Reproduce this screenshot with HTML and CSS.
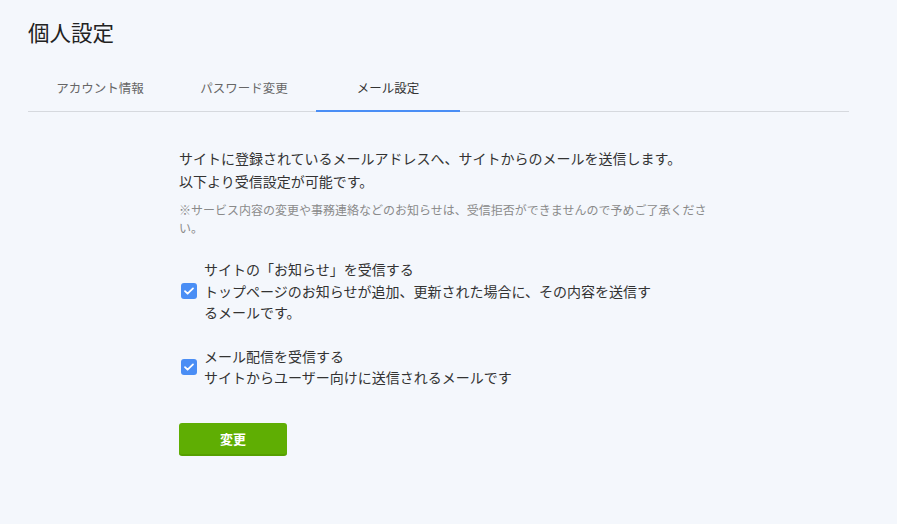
FILE: index.html
```html
<!DOCTYPE html>
<html lang="ja">
<head>
<meta charset="utf-8">
<title>個人設定</title>
<link rel="stylesheet" href="styles.css">
</head>
<body>
<div class="page">
  <h1 class="title">個人設定</h1>
  <nav class="tabs">
    <div class="tab">アカウント情報</div>
    <div class="tab">パスワード変更</div>
    <div class="tab active">メール設定</div>
  </nav>
  <section class="content">
    <p class="lead">サイトに登録されているメールアドレスへ、サイトからのメールを送信します。<br>以下より受信設定が可能です。</p>
    <p class="note">※サービス内容の変更や事務連絡などのお知らせは、受信拒否ができませんので予めご了承ください。</p>
    <div class="options">
      <label class="option">
        <span class="check"><svg width="16" height="16" viewBox="0 0 16 16"><path d="M4 8.2l2.6 2.5L12 5.4" fill="none" stroke="#fff" stroke-width="1.8" stroke-linecap="round" stroke-linejoin="round"/></svg></span>
        <span class="label">サイトの「お知らせ」を受信する<br>トップページのお知らせが追加、更新された場合に、その内容を送信するメールです。</span>
      </label>
      <label class="option">
        <span class="check"><svg width="16" height="16" viewBox="0 0 16 16"><path d="M4 8.2l2.6 2.5L12 5.4" fill="none" stroke="#fff" stroke-width="1.8" stroke-linecap="round" stroke-linejoin="round"/></svg></span>
        <span class="label">メール配信を受信する<br>サイトからユーザー向けに送信されるメールです</span>
      </label>
    </div>
    <button class="submit" type="button">変更</button>
  </section>
</div>
</body>
</html>
```
FILE: styles.css
```css
html, body {
  margin: 0;
  padding: 0;
  background: #f4f7fc;
}
body {
  font-family: "Noto Sans CJK JP", "Noto Sans", sans-serif;
  color: #333;
}
.page {
  padding: 16px 48px 0 28px;
}
.title {
  margin: 0;
  font-size: 21.5px;
  font-weight: 400;
  line-height: 32px;
  color: #222;
}
.tabs {
  display: flex;
  margin-top: 30px;
  border-bottom: 1px solid #d6d9de;
}
.tab {
  width: 144px;
  text-align: center;
  font-size: 12.5px;
  line-height: 20px;
  padding-bottom: 12px;
  color: #666;
  margin-bottom: -1px;
  border-bottom: 2px solid transparent;
}
.tab.active {
  color: #333;
  border-bottom-color: #4a8ef5;
}
.content {
  margin-left: 151px;
  width: 532px;
  padding-top: 35px;
}
.lead {
  margin: 0;
  font-size: 14px;
  line-height: 23px;
}
.note {
  margin: 8px 0 0;
  font-size: 12px;
  line-height: 18px;
  color: #8a8a8a;
}
.options {
  display: flex;
  flex-direction: column;
  gap: 22px;
  margin-top: 22px;
}
.option {
  display: flex;
  align-items: center;
  gap: 7px;
  padding-left: 2px;
}
.check {
  width: 16px;
  height: 16px;
  border-radius: 3px;
  background: #4a8ef5;
  flex: none;
  display: flex;
}
.label {
  width: 460px;
  font-size: 14px;
  line-height: 21.5px;
}
.submit {
  margin-top: 34px;
  width: 108px;
  height: 33px;
  border: none;
  border-bottom: 2px solid #56a000;
  border-radius: 3px;
  background: #5fae03;
  color: #fff;
  font-family: inherit;
  font-size: 13px;
  font-weight: 700;
  padding: 0;
}
```
